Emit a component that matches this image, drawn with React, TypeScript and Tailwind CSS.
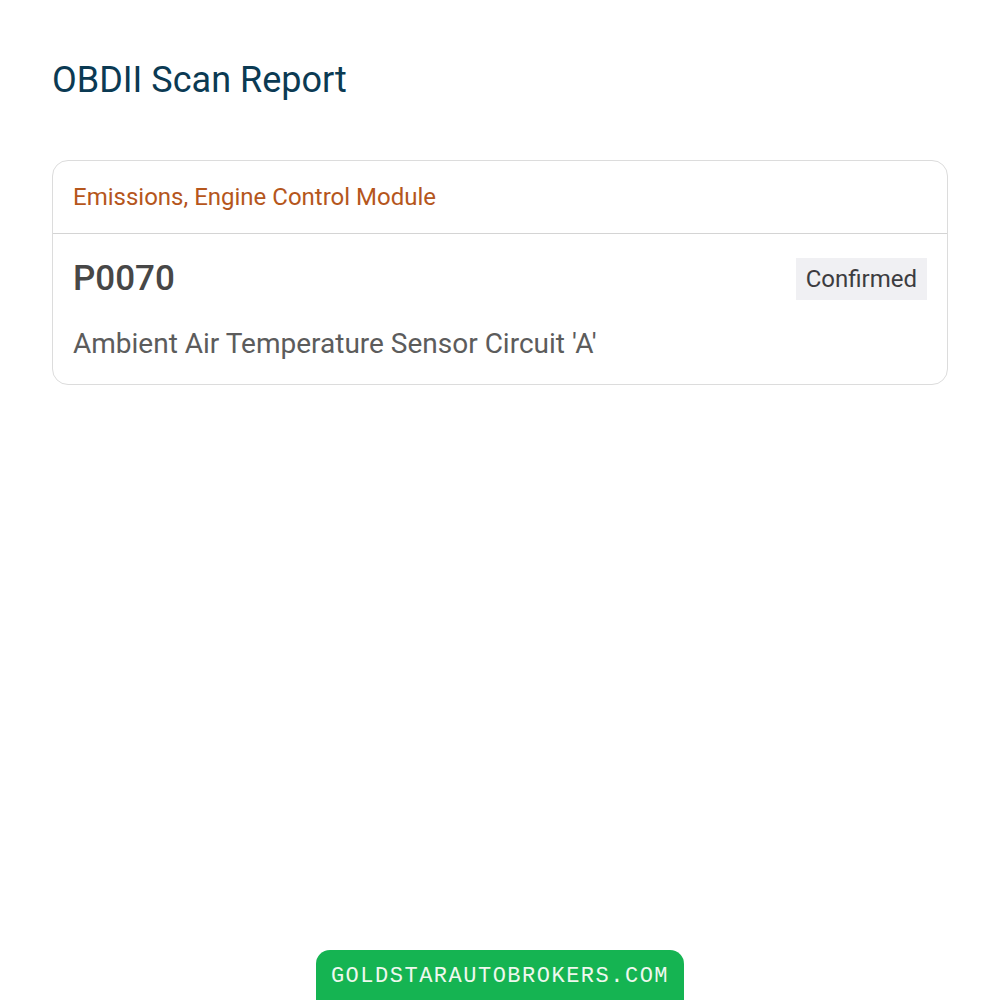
import React from "react";

type Fault = {
  code: string;
  status: string;
  description: string;
};

const faults: Fault[] = [
  {
    code: "P0070",
    status: "Confirmed",
    description: "Ambient Air Temperature Sensor Circuit 'A'",
  },
];

function FaultRow({ code, status, description }: Fault) {
  return (
    <div className="px-5 pt-[23px] pb-[21px]">
      <div className="flex items-center justify-between">
        <span className="text-[35px] font-medium leading-[44px] text-[#474747]">
          {code}
        </span>
        <span className="bg-[#f0f0f3] px-[10px] py-[5px] text-[24px] leading-[32px] text-[#3c3c40]">
          {status}
        </span>
      </div>
      <p className="mt-[24px] text-[28px] leading-[38px] text-[#5c5c5c]">
        {description}
      </p>
    </div>
  );
}

export default function App() {
  return (
    <div
      className="relative min-h-[1000px] w-full bg-white"
      style={{ fontFamily: "Roboto, 'Noto Sans', sans-serif" }}
    >
      <div className="px-[52px] pt-[58px]">
        <h1 className="text-[36px] leading-[44px] text-[#0b3a53]">
          OBDII Scan Report
        </h1>

        <div className="mt-[58px] overflow-hidden rounded-2xl border border-[#dcdcdc]">
          <div className="border-b border-[#d4d4d4] px-5 py-[20px]">
            <h2 className="text-[24px] leading-[32px] text-[#b5561c]">
              Emissions, Engine Control Module
            </h2>
          </div>
          {faults.map((f) => (
            <FaultRow key={f.code} {...f} />
          ))}
        </div>
      </div>

      <div className="absolute bottom-0 left-1/2 -translate-x-1/2">
        <div className="flex h-[50px] w-[368px] items-center justify-center rounded-t-[14px] bg-[#15b452] pt-[3px]">
          <span
            className="text-[22px] tracking-[1.5px] text-[#eef8ee]"
            style={{ fontFamily: "'Liberation Mono', monospace" }}
          >
            GOLDSTARAUTOBROKERS.COM
          </span>
        </div>
      </div>
    </div>
  );
}
